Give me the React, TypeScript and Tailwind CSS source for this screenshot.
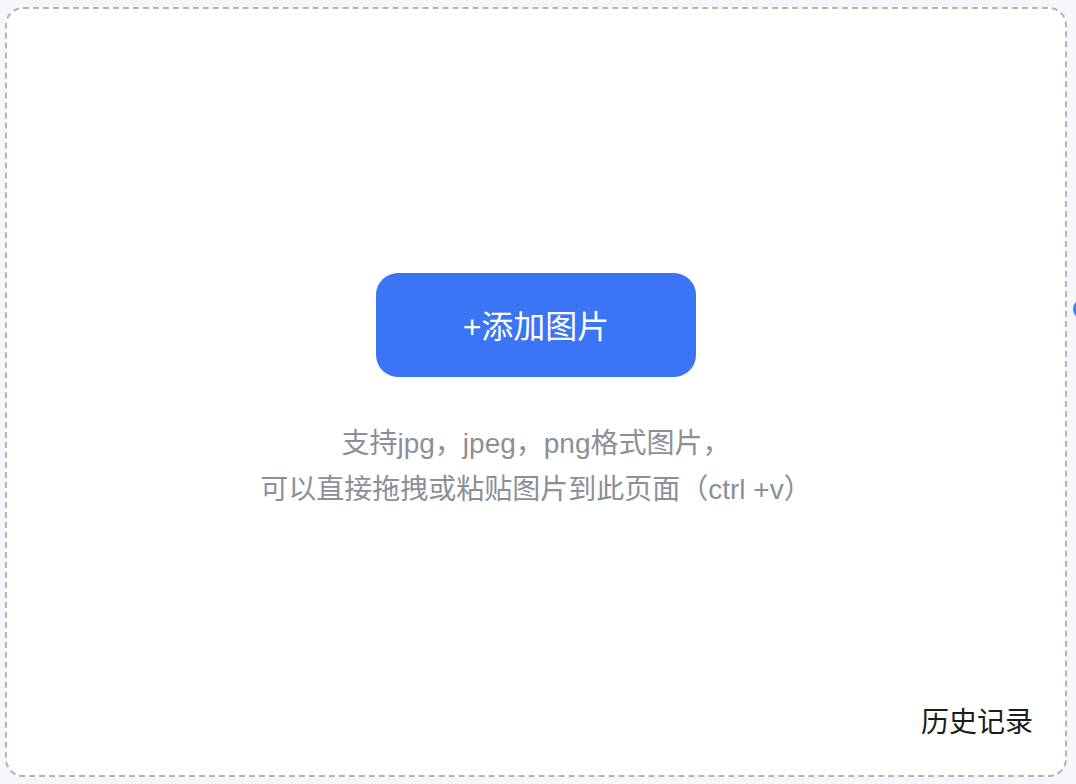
import React from "react";

const FONT = '"Liberation Sans", "Noto Sans CJK SC", sans-serif';

export default function App() {
  return (
    <div
      className="relative h-[784px] w-[1076px] overflow-hidden bg-[#f5f7fa] pt-[7px] pr-[9px] pb-[7px] pl-[5px]"
      style={{ fontFamily: FONT }}
    >
      {/* 上传区域 */}
      <div className="relative flex h-full w-full flex-col items-center justify-center rounded-[18px] border-2 border-dashed border-[#aeb5c2] bg-white">
        <button className="mt-[2px] flex h-[104px] w-[320px] items-center justify-center rounded-[22px] bg-[#3b74f4] pt-[4px] text-[32px] text-white">
          +添加图片
        </button>
        <div className="mt-[44px] text-center text-[28px] leading-[46px] text-[#8c8f96]">
          <p>支持jpg，jpeg，png格式图片，</p>
          <p>可以直接拖拽或粘贴图片到此页面（ctrl +v）</p>
        </div>

        <span className="absolute right-[32px] bottom-[36px] text-[28px] leading-[32px] text-[#1c1c1c]">
          历史记录
        </span>
      </div>

      {/* 右侧悬浮按钮（仅露出边缘） */}
      <div className="absolute top-[298px] left-[1073px] h-[22px] w-[22px] rounded-full bg-[#3b82f6]" />
    </div>
  );
}
